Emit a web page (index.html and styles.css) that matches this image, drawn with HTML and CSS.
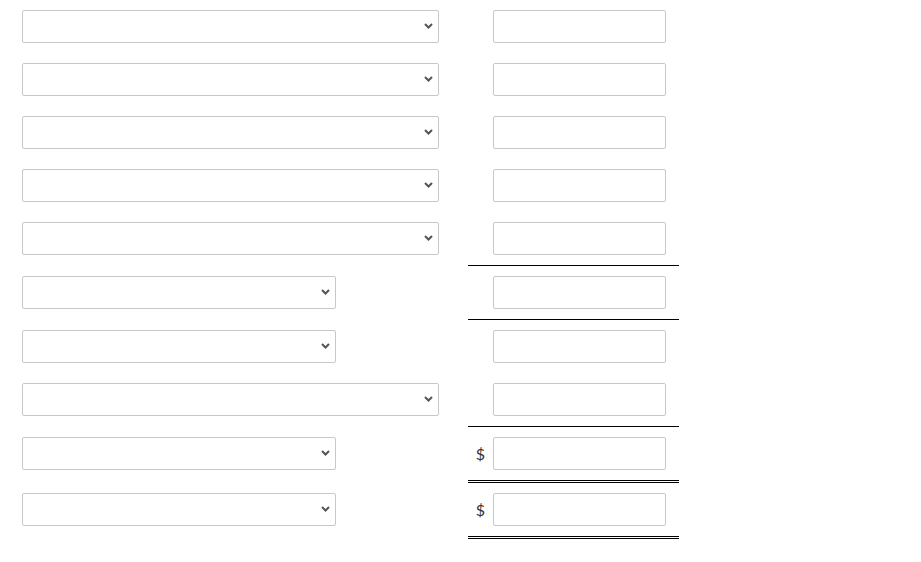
FILE: index.html
```html
<!DOCTYPE html>
<html>
<head>
<meta charset="utf-8">
<link rel="stylesheet" href="styles.css">
</head>
<body>
<div class="sheet">
  <div class="row">
    <div class="lc"><div class="sel long"><svg class="chev" width="9" height="6" viewBox="0 0 9 6"><path d="M1 1 L4.5 4.5 L8 1" fill="none" stroke="#555" stroke-width="2"/></svg></div></div>
    <div class="rc"><span class="cur"></span><div class="inp"></div></div>
  </div>
  <div class="row">
    <div class="lc"><div class="sel long"><svg class="chev" width="9" height="6" viewBox="0 0 9 6"><path d="M1 1 L4.5 4.5 L8 1" fill="none" stroke="#555" stroke-width="2"/></svg></div></div>
    <div class="rc"><span class="cur"></span><div class="inp"></div></div>
  </div>
  <div class="row">
    <div class="lc"><div class="sel long"><svg class="chev" width="9" height="6" viewBox="0 0 9 6"><path d="M1 1 L4.5 4.5 L8 1" fill="none" stroke="#555" stroke-width="2"/></svg></div></div>
    <div class="rc"><span class="cur"></span><div class="inp"></div></div>
  </div>
  <div class="row">
    <div class="lc"><div class="sel long"><svg class="chev" width="9" height="6" viewBox="0 0 9 6"><path d="M1 1 L4.5 4.5 L8 1" fill="none" stroke="#555" stroke-width="2"/></svg></div></div>
    <div class="rc"><span class="cur"></span><div class="inp"></div></div>
  </div>
  <div class="row">
    <div class="lc"><div class="sel long"><svg class="chev" width="9" height="6" viewBox="0 0 9 6"><path d="M1 1 L4.5 4.5 L8 1" fill="none" stroke="#555" stroke-width="2"/></svg></div></div>
    <div class="rc single"><span class="cur"></span><div class="inp"></div></div>
  </div>
  <div class="row">
    <div class="lc"><div class="sel short"><svg class="chev" width="9" height="6" viewBox="0 0 9 6"><path d="M1 1 L4.5 4.5 L8 1" fill="none" stroke="#555" stroke-width="2"/></svg></div></div>
    <div class="rc single"><span class="cur"></span><div class="inp"></div></div>
  </div>
  <div class="row">
    <div class="lc"><div class="sel short"><svg class="chev" width="9" height="6" viewBox="0 0 9 6"><path d="M1 1 L4.5 4.5 L8 1" fill="none" stroke="#555" stroke-width="2"/></svg></div></div>
    <div class="rc"><span class="cur"></span><div class="inp"></div></div>
  </div>
  <div class="row">
    <div class="lc"><div class="sel long"><svg class="chev" width="9" height="6" viewBox="0 0 9 6"><path d="M1 1 L4.5 4.5 L8 1" fill="none" stroke="#555" stroke-width="2"/></svg></div></div>
    <div class="rc single"><span class="cur"></span><div class="inp"></div></div>
  </div>
  <div class="row">
    <div class="lc"><div class="sel short"><svg class="chev" width="9" height="6" viewBox="0 0 9 6"><path d="M1 1 L4.5 4.5 L8 1" fill="none" stroke="#555" stroke-width="2"/></svg></div></div>
    <div class="rc double"><span class="cur">$</span><div class="inp"></div></div>
  </div>
  <div class="row">
    <div class="lc"><div class="sel short"><svg class="chev" width="9" height="6" viewBox="0 0 9 6"><path d="M1 1 L4.5 4.5 L8 1" fill="none" stroke="#555" stroke-width="2"/></svg></div></div>
    <div class="rc double"><span class="cur">$</span><div class="inp"></div></div>
  </div>
</div>
</body>
</html>
```
FILE: styles.css
```css
html, body {
  margin: 0;
  padding: 0;
  background: #fff;
  font-family: Lato, "Liberation Sans", sans-serif;
  color: #333;
}
.sheet {
  display: flex;
  flex-direction: column;
}
.row {
  display: flex;
}
.lc {
  width: 446px;
  padding: 10px 0 10px 22px;
}
.rc {
  width: 198px;
  padding: 10px 13px 10px 0;
  display: flex;
  align-items: center;
}
.rc.single {
  border-bottom: 1px solid #000;
}
.rc.double {
  border-bottom: 3px double #000;
}
.cur {
  width: 25px;
  text-align: center;
  font-size: 16px;
  line-height: 31px;
}
.inp {
  width: 171px;
  height: 31px;
  border: 1px solid #c8c8c8;
  border-radius: 2px;
  background: #fff;
}
.sel {
  position: relative;
  height: 31px;
  border: 1px solid #c8c8c8;
  border-radius: 2px;
  background: #fff;
}
.sel.long {
  width: 415px;
}
.sel.short {
  width: 312px;
}
.chev {
  position: absolute;
  right: 5px;
  top: 12px;
}
```
